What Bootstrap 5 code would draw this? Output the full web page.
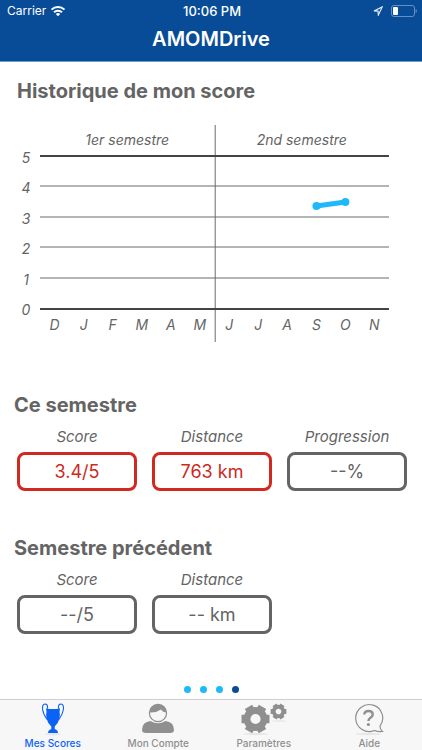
<!DOCTYPE html>
<html lang="fr">
<head>
<meta charset="utf-8">
<meta name="viewport" content="width=device-width, initial-scale=1">
<title>AMOMDrive</title>
<link href="https://cdn.jsdelivr.net/npm/bootstrap@5.3.0/dist/css/bootstrap.min.css" rel="stylesheet">
<style>
  body { font-family: Inter, "Liberation Sans", sans-serif; color: #646464; background: #fff; }
  .app-header { background: #084c98; border-bottom: 1px solid #6f9bd0; padding-bottom: 5px; }
  .status-bar { font-size: 12px; line-height: 22px; padding: 0 5px 0 7px; }
  .status-bar > * { flex: 1 1 0; }
  .clock { font-size: 13px; font-weight: 500; }
  .app-title { font-size: 20px; line-height: 34px; }
  .section-title { font-size: 20px; line-height: 26px; font-weight: 700; }
  .history { padding: 16px 33px 0 17px; margin-bottom: 50px; }
  .plot { margin: 21px 0 0 23px; height: 217px; overflow: visible; }
  .plot text { font-size: 14px; font-style: italic; fill: #646464; }
  .plot .sem { text-anchor: middle; }
  .grid-line { stroke: #6a6a6a; stroke-width: 1; }
  .edge-line { stroke: #444; stroke-width: 2; }
  .trend { stroke: #1fb8fa; fill: #1fb8fa; stroke-width: 5; }
  .period { padding: 0 15px 0 14px; margin-bottom: 44px; }
  .figures { gap: 15px; padding-left: 3px; display: grid; grid-template-columns: repeat(3, 1fr); margin: 8px 0 0; }
  .figures dt { font-size: 15px; line-height: 22px; font-weight: 400; font-style: italic; margin-bottom: 4px; }
  .figures dd { font-size: 18px; line-height: 33px; border: 3px solid #646464; border-radius: 8px; margin: 0; }
  .figures .alert-value { color: #cb2a1f; border-color: #d02a20; }
  .pager { gap: 9px; padding-bottom: 6px; }
  .page-dot { width: 7px; height: 7px; border: 0; padding: 0; background: #1fb8fa; border-radius: 50%; }
  .page-dot.current { background: #084c98; }
  .tab-bar { background: #f7f7f7; border-top: 1px solid #cfcfcf; }
  .tab-bar a { font-size: 10px; line-height: 12px; font-weight: 500; color: #8f8f8f; text-decoration: none; padding: 3px 0 1px; }
  .tab-bar a.active { color: #0b63f6; }
  .tab-bar svg { height: 34px; }
</style>
<script src="https://cdn.jsdelivr.net/npm/bootstrap@5.3.0/dist/js/bootstrap.bundle.min.js"></script>
</head>
<body class="d-flex flex-column min-vh-100">
<header class="app-header text-white text-center">
  <div class="status-bar d-flex align-items-center">
    <div class="d-flex align-items-center gap-1">
      <span>Carrier</span>
      <svg width="16" height="12" viewBox="0 0 16 12" fill="none" stroke="#fff" stroke-width="2" aria-hidden="true"><path d="M1.500 4.600a9.200 9.200 0 0 1 13 0M4 7.300a5.700 5.700 0 0 1 8 0"/><path d="M8 11.300L5.800 9.100a3.100 3.100 0 0 1 4.400 0z" fill="#fff" stroke="none"/></svg>
    </div>
    <div class="clock">10:06 PM</div>
    <div class="d-flex align-items-center justify-content-end gap-2">
      <svg width="10" height="10" viewBox="0 0 9 9" fill="none" stroke="#e3eefa" aria-hidden="true"><path d="M.8 4.500L8.300.8 4.800 8.200 4.500 4.600z"/></svg>
      <svg width="26" height="12" viewBox="0 0 26 12" aria-hidden="true"><rect x=".5" y=".5" width="23" height="11" rx="2.500" fill="none" stroke="#6590c4"/><rect x="2" y="2" width="5" height="8" rx="1" fill="#fff"/><path d="M24.600 4q1.300.5 1.300 2t-1.300 2z" fill="#6590c4"/></svg>
    </div>
  </div>
  <h1 class="app-title fw-semibold mb-0">AMOMDrive</h1>
</header>

<main class="flex-grow-1 d-flex flex-column">
  <section class="history">
    <h2 class="section-title mb-0">Historique de mon score</h2>
    <div class="d-flex">
      <svg class="plot flex-fill" role="img" aria-label="Historique du score par mois">
        <text class="sem" x="25%" y="20">1er semestre</text>
        <text class="sem" x="75%" y="20">2nd semestre</text>
        <g class="grid-line">
          <line x1="0" x2="100%" y1="61" y2="61"/>
          <line x1="0" x2="100%" y1="92" y2="92"/>
          <line x1="0" x2="100%" y1="122" y2="122"/>
          <line x1="0" x2="100%" y1="153" y2="153"/>
          <line x1="50.200%" x2="50.200%" y1="0" y2="217"/>
        </g>
        <g class="edge-line">
          <line x1="0" x2="100%" y1="31" y2="31"/>
          <line x1="0" x2="100%" y1="184" y2="184"/>
        </g>
        <g text-anchor="middle">
          <text x="-14" y="38">5</text><text x="-14" y="68">4</text><text x="-14" y="99">3</text>
          <text x="-14" y="129">2</text><text x="-14" y="160">1</text><text x="-14" y="190">0</text>
        </g>
        <g text-anchor="middle">
          <text x="4.2%" y="205">D</text><text x="12.5%" y="205">J</text><text x="20.8%" y="205">F</text>
          <text x="29.2%" y="205">M</text><text x="37.5%" y="205">A</text><text x="45.8%" y="205">M</text>
          <text x="54.2%" y="205">J</text><text x="62.5%" y="205">J</text><text x="70.8%" y="205">A</text>
          <text x="79.2%" y="205">S</text><text x="87.5%" y="205">O</text><text x="95.8%" y="205">N</text>
        </g>
        <g class="trend">
          <line x1="79.2%" y1="81" x2="87.5%" y2="77"/>
          <circle cx="79.2%" cy="81" r="4" stroke="none"/><circle cx="87.5%" cy="77" r="4" stroke="none"/>
        </g>
      </svg>
    </div>
  </section>

  <section class="period">
    <h2 class="section-title mb-0">Ce semestre</h2>
    <dl class="figures text-center">
      <div><dt>Score</dt><dd class="alert-value">3.4/5</dd></div>
      <div><dt>Distance</dt><dd class="alert-value">763 km</dd></div>
      <div><dt>Progression</dt><dd>--%</dd></div>
    </dl>
  </section>

  <section class="period">
    <h2 class="section-title mb-0">Semestre précédent</h2>
    <dl class="figures text-center">
      <div><dt>Score</dt><dd>--/5</dd></div>
      <div><dt>Distance</dt><dd>-- km</dd></div>
    </dl>
  </section>

  <div class="pager d-flex justify-content-center mt-auto">
    <button class="page-dot" type="button" aria-label="Page 1"></button>
    <button class="page-dot" type="button" aria-label="Page 2"></button>
    <button class="page-dot" type="button" aria-label="Page 3"></button>
    <button class="page-dot current" type="button" aria-label="Page 4" aria-current="page"></button>
  </div>
</main>

<nav class="tab-bar row row-cols-4 g-0 text-center">
  <a class="active d-flex flex-column align-items-center" href="#scores" aria-current="page">
    <svg width="24" viewBox="0 0 24 34" aria-hidden="true">
      <ellipse cx="12" cy="31" rx="8" ry="1.500" fill="#e7e7e7"/>
      <path d="M6.500 5.500Q7 1 4 1 1 1.200 1.600 6.500 2.200 11 6 16.500M17.500 5.500Q17 1 20 1q3 .2 2.400 5.500Q21.800 11 18 16.500" fill="none" stroke="#0b63f6" stroke-width="1.100"/>
      <path d="M5 5.200Q12 7 19 5.200L18.500 9Q19.500 12 18.300 16 17 21 13.700 23.500V26Q17 27 17 30H7Q7 27 10.300 26V23.500Q7 21 5.700 16 4.500 12 5.500 9z" fill="#0b63f6"/>
    </svg>
    <span>Mes Scores</span>
  </a>
  <a class="d-flex flex-column align-items-center" href="#compte">
    <svg width="34" viewBox="0 0 34 34" aria-hidden="true">
      <path d="M1 27Q1 19 9.500 18 17 22.500 24.500 18 33 19 33 27 33 30 29 30H5Q1 30 1 27z" fill="#8f8f8f"/>
      <circle cx="17" cy="10" r="8.600" fill="#f7f7f7" stroke="#8f8f8f" stroke-width="1.200"/>
      <path d="M8.700 9.500Q9 1.500 17 1.200 25 1.500 25.500 9.500 22 9.500 20 6.500 15 10 8.700 9.500z" fill="#8f8f8f"/>
    </svg>
    <span>Mon Compte</span>
  </a>
  <a class="d-flex flex-column align-items-center" href="#parametres">
    <svg width="46" viewBox="0 0 46 34" aria-hidden="true">
      <ellipse cx="15" cy="31" rx="13" ry="1.200" fill="#e7e7e7"/>
      <ellipse cx="38" cy="18" rx="7" ry="1" fill="#ebebeb"/>
      <defs>
        <g id="gear" fill="none" stroke="#8f8f8f">
          <circle r="8.500" stroke-width="6.800"/>
          <path d="M10 0H14M-10 0H-14" stroke-width="8.500"/>
          <path d="M10 0H14M-10 0H-14" stroke-width="8.500" transform="rotate(60)"/>
          <path d="M10 0H14M-10 0H-14" stroke-width="8.500" transform="rotate(120)"/>
        </g>
      </defs>
      <use href="#gear" transform="translate(14.500 16)"/>
      <use href="#gear" transform="translate(37.500 8.500) scale(.56)"/>
    </svg>
    <span>Paramètres</span>
  </a>
  <a class="d-flex flex-column align-items-center" href="#aide">
    <svg width="30" viewBox="0 0 30 34" aria-hidden="true">
      <ellipse cx="14" cy="31" rx="13" ry="1.200" fill="#e7e7e7"/>
      <path d="M28.500 28.500Q26 26.500 26 23.200A13.500 13.500 0 1 0 20.500 27.500Q24 29 28.500 28.500z" fill="none" stroke="#8f8f8f" stroke-width="1.200"/>
      <path d="M10.300 11.500Q10.600 8 14.500 8q4.200 0 4.200 3.400 0 2-2.300 3.300-2 1.200-2 3.400" fill="none" stroke="#8f8f8f" stroke-width="2.400"/>
      <circle cx="14.400" cy="21.500" r="1.600" fill="#8f8f8f"/>
    </svg>
    <span>Aide</span>
  </a>
</nav>
</body>
</html>
